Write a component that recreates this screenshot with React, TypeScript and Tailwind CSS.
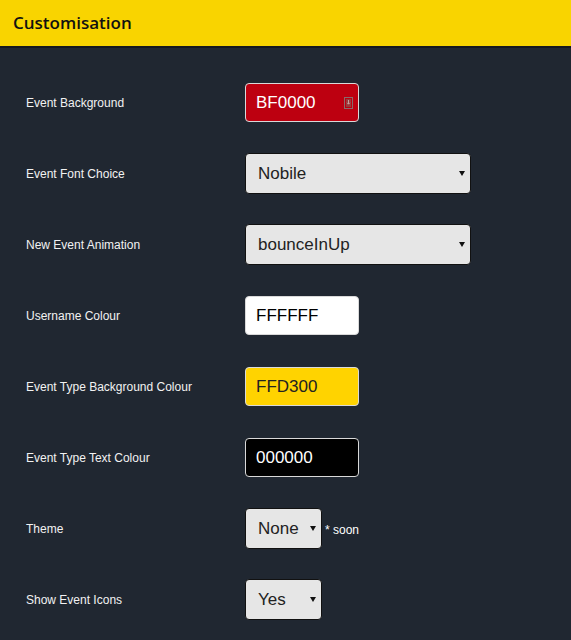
import React from "react";

const Caret = () => (
  <svg width="6" height="5" viewBox="0 0 6 5" className="shrink-0">
    <path d="M0 0 L6 0 L3 5 Z" fill="#111" />
  </svg>
);

function Row({ label, children }: { label: string; children: React.ReactNode }) {
  return (
    <div className="flex h-[71px] items-center">
      <div className="w-[245px] shrink-0 pl-[26px] text-[12px] text-[#f2f2f2]" style={{ fontFamily: '"Liberation Sans", Arial, sans-serif' }}>
        {label}
      </div>
      <div className="flex items-center">{children}</div>
    </div>
  );
}

function ColorInput({ value, bg, fg, icon }: { value: string; bg: string; fg: string; icon?: boolean }) {
  return (
    <div
      className="relative flex h-[39px] w-[114px] items-center rounded-[4px] border border-[#d9d9d9] pl-[10px] text-[17px]"
      style={{ background: bg, color: fg }}
    >
      {value}
      {icon && (
        <svg width="9" height="12" viewBox="0 0 9 12" className="absolute right-[5px] top-[13px]">
          <rect x="0.5" y="0.5" width="8" height="11" fill="none" stroke="#8a6a6a" strokeWidth="1" />
          <rect x="2" y="2" width="5" height="8" fill="#9a3a3a" />
          <path d="M4.5 3 V7 M3.2 5.8 L4.5 7.2 L5.8 5.8" stroke="#c9a0a0" strokeWidth="1" fill="none" />
        </svg>
      )}
    </div>
  );
}

function Select({ value, width }: { value: string; width: string }) {
  return (
    <div className={`flex h-[41px] ${width} items-center justify-between rounded-[4px] border border-[#111] bg-[#e6e6e6] pl-[12px] pr-[5px] text-[17px] text-[#222]`}>
      <span>{value}</span>
      <Caret />
    </div>
  );
}

export default function App() {
  return (
    <div className="min-h-[640px] w-[571px] bg-[#202731]" style={{ fontFamily: '"Liberation Sans", Arial, sans-serif' }}>
      <div className="flex h-[46px] items-center bg-[#f9d400] pl-[13px]">
        <span className="text-[17px] font-semibold text-[#111]" style={{ fontFamily: '"Open Sans", sans-serif' }}>
          Customisation
        </span>
      </div>
      <div className="h-[2px] bg-[#15181d]" />
      <div className="pt-[19px]">
        <Row label="Event Background">
          <ColorInput value="BF0000" bg="#bd0010" fg="#ffffff" icon />
        </Row>
        <Row label="Event Font Choice">
          <Select value="Nobile" width="w-[226px]" />
        </Row>
        <Row label="New Event Animation">
          <Select value="bounceInUp" width="w-[226px]" />
        </Row>
        <Row label="Username Colour">
          <ColorInput value="FFFFFF" bg="#ffffff" fg="#000000" />
        </Row>
        <Row label="Event Type Background Colour">
          <ColorInput value="FFD300" bg="#ffd300" fg="#222222" />
        </Row>
        <Row label="Event Type Text Colour">
          <ColorInput value="000000" bg="#000000" fg="#ffffff" />
        </Row>
        <Row label="Theme">
          <Select value="None" width="w-[77px]" />
          <span className="ml-[3px] mt-[2px] text-[12px] text-white">* soon</span>
        </Row>
        <Row label="Show Event Icons">
          <Select value="Yes" width="w-[77px]" />
        </Row>
      </div>
    </div>
  );
}
